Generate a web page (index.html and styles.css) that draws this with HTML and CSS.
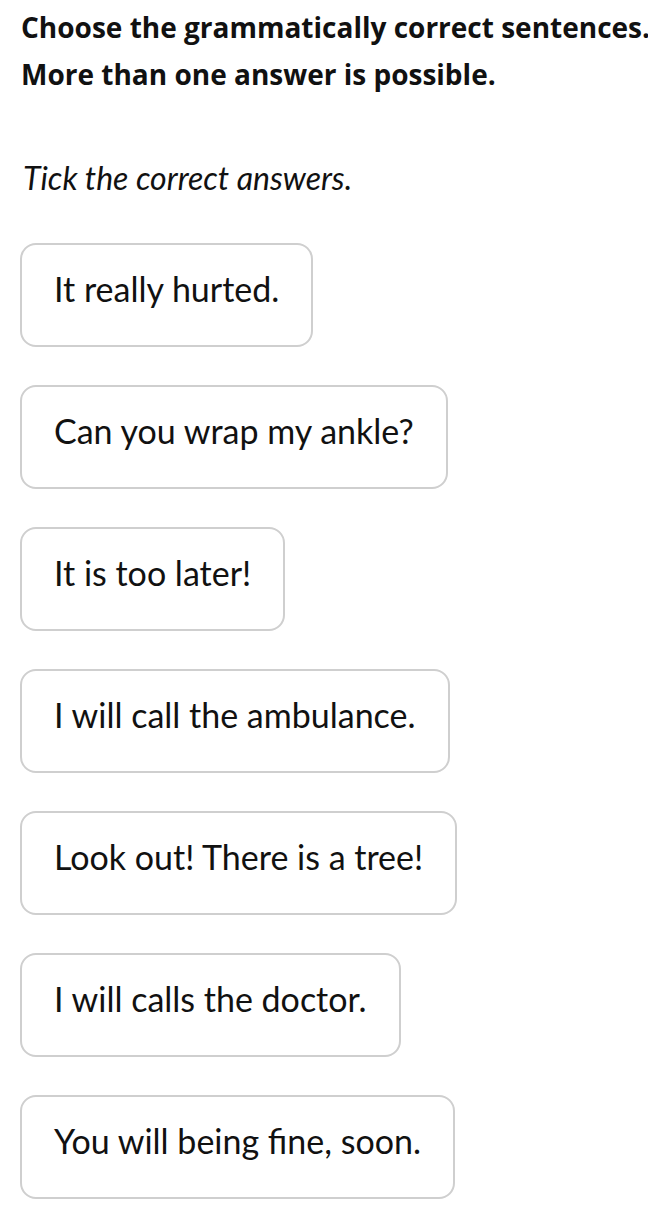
FILE: index.html
```html
<!DOCTYPE html>
<html lang="en">
<head>
<meta charset="utf-8">
<title>Choose the grammatically correct sentences</title>
<link rel="stylesheet" href="styles.css">
</head>
<body>
<main class="exercise">
  <h1 class="prompt">
    <span class="prompt-line">Choose the grammatically correct sentences.</span>
    <span class="prompt-line">More than one answer is possible.</span>
  </h1>
  <p class="instruction">Tick the correct answers.</p>
  <ul class="options">
    <li class="option">It really hurted.</li>
    <li class="option">Can you wrap my ankle?</li>
    <li class="option">It is too later!</li>
    <li class="option">I will call the ambulance.</li>
    <li class="option">Look out! There is a tree!</li>
    <li class="option">I will calls the doctor.</li>
    <li class="option">You will being fine, soon.</li>
  </ul>
</main>
</body>
</html>
```

FILE: styles.css
```css
html, body {
  margin: 0;
  padding: 0;
  background: #ffffff;
}

body {
  font-family: Lato, "Liberation Sans", sans-serif;
  color: #111111;
  overflow: hidden;
}

.exercise {
  padding: 4px 0 0 20px;
}

.prompt {
  margin: 0;
  padding-left: 1px;
  font-family: "Open Sans", Lato, sans-serif;
  font-size: 28px;
  font-weight: 700;
  line-height: 47px;
  display: flex;
  flex-direction: column;
  white-space: nowrap;
}

.instruction {
  margin: 60px 0 0 0;
  padding-left: 3px;
  font-size: 32px;
  font-style: italic;
  font-weight: 400;
  line-height: 40px;
}

.options {
  list-style: none;
  margin: 45px 0 0 0;
  padding: 0;
  display: flex;
  flex-direction: column;
  align-items: flex-start;
  gap: 38px;
}

.option {
  box-sizing: border-box;
  height: 104px;
  display: flex;
  align-items: center;
  padding: 0 32px 13px;
  border: 2px solid #cfcfcf;
  border-radius: 16px;
  font-size: 34px;
  line-height: 40px;
  white-space: nowrap;
}
```
